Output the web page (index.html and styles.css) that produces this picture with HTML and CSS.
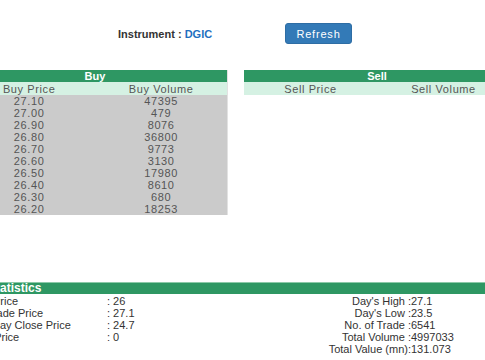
FILE: index.html
```html
<!DOCTYPE html>
<html lang="en">
<head>
    <meta charset="UTF-8">
    <title>Market Depth</title>
    <link rel="stylesheet" href="styles.css">
</head>
<body>
<div class="page">

    <div class="topbar">
        <div class="instrument">Instrument : <span class="code">DGIC</span></div>
        <button class="refresh">Refresh</button>
    </div>

    <div class="books">
        <table class="book buy">
            <tr><th colspan="2" class="book-title">Buy</th></tr>
            <tr class="book-head"><td>Buy Price</td><td>Buy Volume</td></tr>
            <tr><td>27.10</td><td>47395</td></tr>
            <tr><td>27.00</td><td>479</td></tr>
            <tr><td>26.90</td><td>8076</td></tr>
            <tr><td>26.80</td><td>36800</td></tr>
            <tr><td>26.70</td><td>9773</td></tr>
            <tr><td>26.60</td><td>3130</td></tr>
            <tr><td>26.50</td><td>17980</td></tr>
            <tr><td>26.40</td><td>8610</td></tr>
            <tr><td>26.30</td><td>680</td></tr>
            <tr><td>26.20</td><td>18253</td></tr>
        </table>
        <table class="book sell">
            <tr><th colspan="2" class="book-title">Sell</th></tr>
            <tr class="book-head"><td>Sell Price</td><td>Sell Volume</td></tr>
        </table>
    </div>

    <div class="stats">
        <div class="stats-title">Statistics</div>
        <div class="stats-body">
            <div class="stats-left">
                <div class="stat"><span class="label">Open Price</span><span>: 26</span></div>
                <div class="stat"><span class="label">Last Trade Price</span><span>: 27.1</span></div>
                <div class="stat"><span class="label">Yesterday Close Price</span><span>: 24.7</span></div>
                <div class="stat"><span class="label">Close Price</span><span>: 0</span></div>
            </div>
            <div class="stats-right">
                <div class="stat"><span class="label">Day's High :</span><span>27.1</span></div>
                <div class="stat"><span class="label">Day's Low :</span><span>23.5</span></div>
                <div class="stat"><span class="label">No. of Trade :</span><span>6541</span></div>
                <div class="stat"><span class="label">Total Volume :</span><span>4997033</span></div>
                <div class="stat"><span class="label">Total Value (mn):</span><span>131.073</span></div>
            </div>
        </div>
    </div>

</div>
</body>
</html>
```

FILE: styles.css
```css
body {
    margin: 0;
    overflow: hidden;
    font-family: "Liberation Sans", Arial, sans-serif;
    background-color: #fff;
}
.page {
    width: 560px;
    margin-left: -37px;
}
.topbar {
    display: flex;
    align-items: center;
    padding: 23px 0 0 155px;
    height: 21px;
}
.instrument {
    width: 167px;
    font-size: 11px;
    font-weight: bold;
    color: #333;
}
.instrument .code {
    color: #1f6fc0;
}
.refresh {
    width: 67px;
    height: 21px;
    padding: 0;
    font-family: inherit;
    font-size: 11px;
    letter-spacing: 0.8px;
    color: #fff;
    background-color: #337ab7;
    border: 1px solid #2e6da4;
    border-radius: 3px;
}
.books {
    display: flex;
    align-items: flex-start;
    gap: 16px;
    margin-top: 26px;
}
.book {
    width: 265px;
    border-collapse: collapse;
    font-size: 11px;
    letter-spacing: 0.6px;
    color: #555;
    table-layout: fixed;
}
.book.sell {
    width: 266px;
}
.book td,
.book th {
    padding: 0;
    text-align: center;
    line-height: 12px;
    height: 12px;
}
.book-title {
    background-color: #2e9763;
    color: #fff;
    font-weight: bold;
    letter-spacing: 0;
}
.book-head td {
    background-color: #d5f1e3;
    height: 12px;
    padding-top: 1px;
}
.buy tr:not(.book-head) td {
    background-color: #cbcbcb;
}
.buy {
    border-right: 1px solid #e2e2e2;
}
.stats {
    margin-top: 67px;
    font-size: 11px;
    color: #333;
}
.stats-title {
    height: 11px;
    line-height: 11px;
    padding-left: 25px;
    background-color: #2e9763;
    color: #fff;
    font-size: 12px;
    font-weight: bold;
    border-top: 1px solid #8cc9a8;
}
.stats-body {
    display: flex;
    padding-top: 1px;
}
.stats-left {
    width: 288px;
}
.stat {
    display: flex;
    height: 12px;
    line-height: 12px;
}
.stats-left .label {
    width: 144px;
}
.stats-right .label {
    width: 160px;
    text-align: right;
}
```
